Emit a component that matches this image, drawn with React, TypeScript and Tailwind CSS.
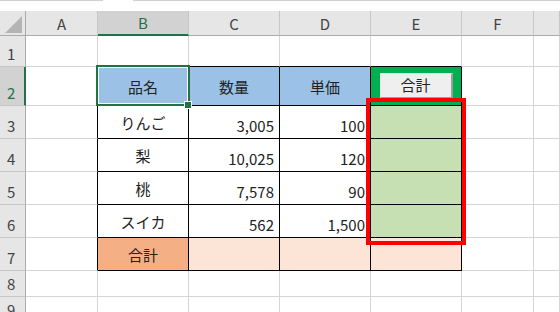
import clsx from "clsx"

// column widths include each column's right gridline
const COL_W = ["w-[72px]", "w-[91px]", "w-[91px]", "w-[91px]", "w-[91px]", "w-[72px]", "flex-1"]
const LETTERS = ["A", "B", "C", "D", "E", "F", ""]
const ROW_H = ["h-[31px]", "h-[39px]", "h-[33px]", "h-[33px]", "h-[33px]", "h-[33px]", "h-[33px]", "h-[26px]", "h-[26px]"]

const fruits = [
  ["りんご", "3,005", "100"],
  ["梨", "10,025", "120"],
  ["桃", "7,578", "90"],
  ["スイカ", "562", "1,500"],
]

type Cell = { text?: string; kind?: "name" | "num" | "button"; bg?: string }

function cellAt(row: number, col: number): Cell {
  if (row === 2) {
    if (col >= 1 && col <= 3) return { text: ["品名", "数量", "単価"][col - 1], kind: "name", bg: "bg-[#9bc2e6]" }
    if (col === 4) return { kind: "button", bg: "bg-[#00b050]" }
  }
  if (row >= 3 && row <= 6) {
    const f = fruits[row - 3]
    if (col === 1) return { text: f[0], kind: "name" }
    if (col === 2 || col === 3) return { text: f[col - 1], kind: "num" }
    if (col === 4) return { bg: "bg-[#c6e0b4]" }
  }
  if (row === 7) {
    if (col === 1) return { text: "合計", kind: "name", bg: "bg-[#f4b084]" }
    if (col >= 2 && col <= 4) return { bg: "bg-[#fce4d6]" }
  }
  return {}
}

function SheetCell({ row, col }: { row: number; col: number }) {
  const cell = cellAt(row, col)
  const inTable = row >= 2 && row <= 7 && col >= 1 && col <= 4
  const rightBlack = inTable || (col === 0 && row >= 2 && row <= 7)
  const bottomBlack = inTable || (row === 1 && col >= 1 && col <= 4)

  return (
    <div
      className={clsx(
        "flex shrink-0 border-r border-b",
        COL_W[col],
        rightBlack ? "border-r-black" : "border-r-[#d4d4d4]",
        bottomBlack ? "border-b-black" : "border-b-[#d4d4d4]",
        cell.bg,
        cell.kind === "name" && "items-center justify-center",
        cell.kind === "num" && "items-center justify-end pt-[6px] pr-[5px]",
        cell.kind === "button" && "items-center justify-center"
      )}
    >
      {cell.kind === "button" ? (
        <div className="flex h-[26px] w-[73px] items-center justify-center border-t border-l border-r-2 border-b-2 border-t-[#e4e4e4] border-l-[#e4e4e4] border-r-[#9c9c9c] border-b-[#9c9c9c] bg-[#efefef] text-[#222]">
          合計
        </div>
      ) : (
        cell.text && <span className="leading-none">{cell.text}</span>
      )}
    </div>
  )
}

export default function App() {
  return (
    <div className="relative h-[312px] w-[560px] overflow-hidden bg-white font-['Noto_Sans_CJK_JP','Noto_Sans',sans-serif] text-[15px] text-[#222]">
      {/* strip under the formula bar */}
      <div className="flex h-[11px]">
        <div className="h-px w-[103px] bg-[#d0d0d0]" />
        <div className="h-px w-[30px]" />
        <div className="h-px flex-1 bg-[#d0d0d0]" />
      </div>

      {/* column headers */}
      <div className="flex h-[25px] bg-[#e6e6e6] text-[#444]">
        <div className="flex w-[26px] shrink-0 items-end justify-end border-r border-b border-[#ababab] pr-[3px] pb-[2px]">
          <svg width="17" height="17" viewBox="0 0 17 17">
            <polygon points="17,0 17,17 0,17" fill="#b4b4b4" />
          </svg>
        </div>
        {LETTERS.map((l, i) => (
          <div
            key={i}
            className={clsx(
              "flex shrink-0 items-center justify-center border-r border-r-[#c6c6c6]",
              COL_W[i],
              i === 1 ? "border-b-2 border-b-[#217346] bg-[#d2d2d2] text-[#217346]" : "border-b border-b-[#ababab]"
            )}
          >
            <span className="leading-none">{l}</span>
          </div>
        ))}
      </div>

      {/* rows */}
      {ROW_H.map((h, r) => {
        const row = r + 1
        return (
          <div key={row} className={clsx("flex", h)}>
            <div
              className={clsx(
                "flex w-[26px] shrink-0 items-end border-b border-b-[#c6c6c6] pb-[5px] pl-[7px]",
                row === 2
                  ? "border-r-2 border-r-[#217346] bg-[#d2d2d2] text-[#217346]"
                  : "border-r border-r-[#ababab] bg-[#e6e6e6] text-[#444]"
              )}
            >
              <span className="leading-none">{row}</span>
            </div>
            {COL_W.map((_, c) => (
              <SheetCell key={c} row={row} col={c} />
            ))}
          </div>
        )
      })}

      {/* active cell B2 */}
      <div className="absolute top-[65px] left-[96px] h-[41px] w-[94px] border-2 border-[#217346]">
        <div className="h-full w-full border border-white" />
      </div>
      <div className="absolute top-[101px] left-[184px] h-[8px] w-[8px] border border-white bg-[#217346]" />

      {/* red highlight around E3:E6 */}
      <div className="absolute top-[98px] left-[366px] h-[147px] w-[100px] border-4 border-[#ff0000]" />
    </div>
  )
}
